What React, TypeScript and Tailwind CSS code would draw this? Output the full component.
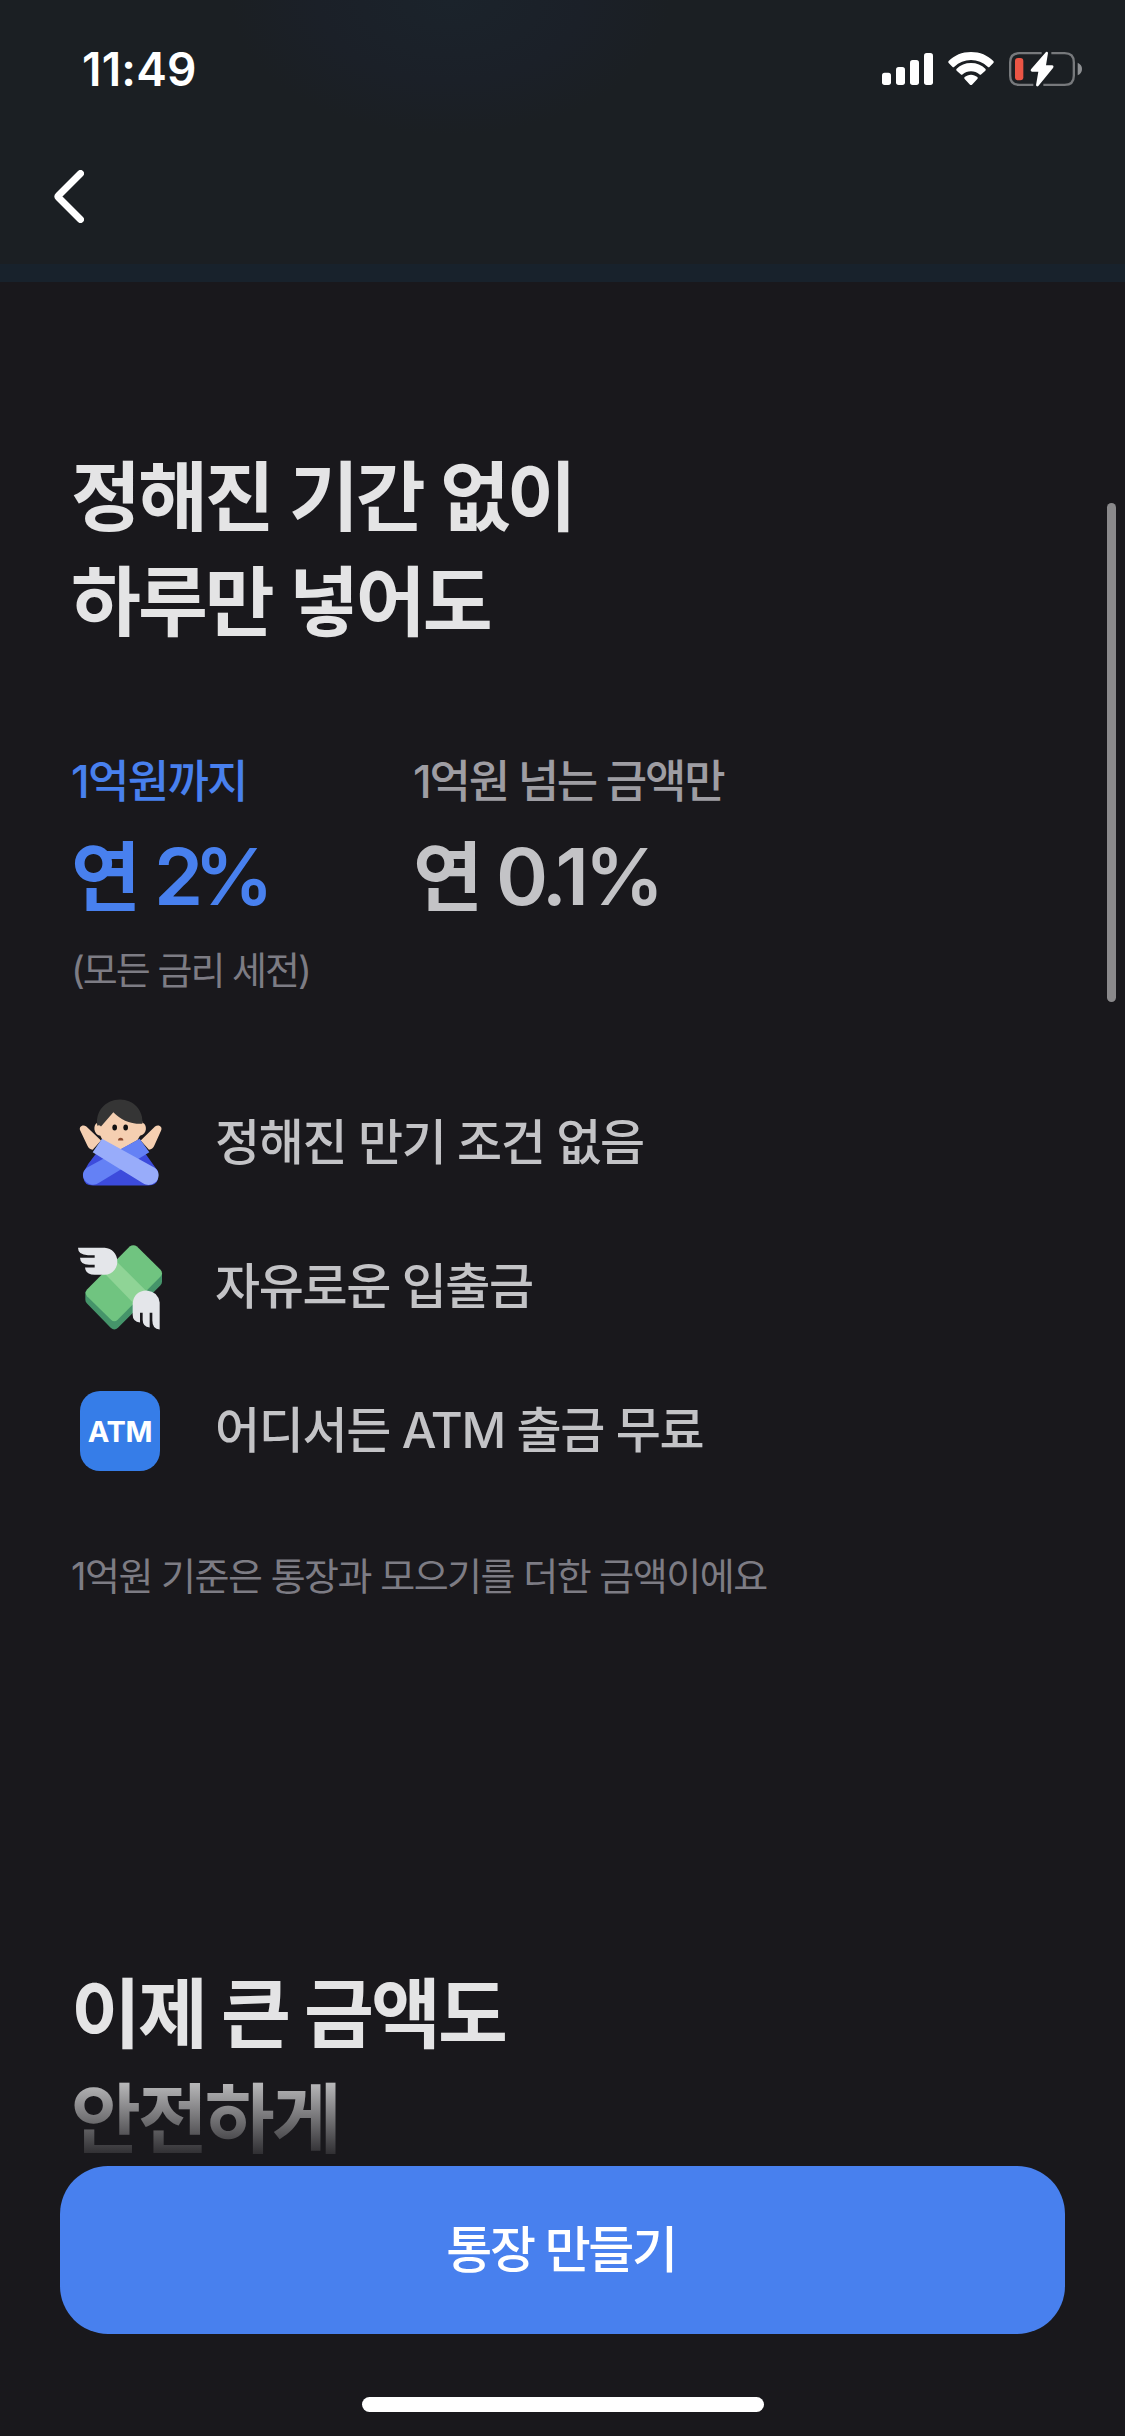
import type { ReactNode } from 'react';

function StatusIcons() {
  return (
    <svg className="h-[80px] w-[240px]" viewBox="0 0 720 240" fill="none">
      <g fill="#fff">
        <rect x="66" y="128" width="27" height="37" rx="8" />
        <rect x="108" y="111" width="27" height="54" rx="8" />
        <rect x="150" y="90" width="27" height="75" rx="8" />
        <rect x="192" y="69" width="27" height="96" rx="8" />
        <path d="M333 66c27 0 50 10 67 27q3 3 0 6l-11 11q-3 3-6 0c-14-13-31-20-50-20s-36 7-50 20q-3 3-6 0l-11-11q-3-3 0-6c17-17 40-27 67-27Z" />
        <path d="M333 99c17 0 32 6 43 17q3 3 0 6l-12 11q-3 3-6 0c-7-6-15-9-25-9s-18 3-25 9q-3 3-6 0l-12-11q-3-3 0-6c11-11 26-17 43-17Z" />
        <path d="M333 134c7 0 14 3 19 7q3 3 0 6l-16 17q-3 2-6 0l-16-17q-3-3 0-6c5-4 12-7 19-7Z" />
      </g>
      <path d="M545 69.500H478Q450.500 69.500 450.500 97V137Q450.500 164.500 478 164.500H520M574 69.500H614Q641.500 69.500 641.500 97V137Q641.500 164.500 614 164.500H550" stroke="#77797c" strokeWidth="7" />
      <path d="M653 98q13 6 13 19t-13 19Z" fill="#8d8f92" />
      <rect x="465" y="84" width="25" height="67" rx="9" fill="#eb5545" />
      <path d="M558 66q5-2 6 3l-6 37h18q7 1 3 8l-44 54q-5 3-7-2l7-41h-19q-6-1-3-7Z" fill="#fff" />
    </svg>
  );
}

function NoGestureIcon() {
  return (
    <svg className="size-24 shrink-0" viewBox="36 43.500 288 288">
      <path d="M61 151c-6-12 7-21 18-13l44 42-25 28q-11-2-16-13ZM303 151c6-12-7-21-18-13l-43 42 25 28q11-2 16-13Z" fill="#f5cfb1" />
      <path d="M106 222 180 170 258 222 294 272V294Q290 315 265 315H99Q72 315 70 290Q68 278 85 250Z" fill="#3c4bdc" />
      <path d="M112 130C114 90 145 60 180 60S246 92 247 127C262 130 263 162 240 166L232 179 181 207 128 179 121 166C99 162 99 132 112 127Z" fill="#f5cfb1" />
      <path d="M112 136C105 92 137 57 180 57C222 57 251 91 247 130C207 131 182 116 160 95L123 138Q117 131 112 136Z" fill="#353535" />
      <ellipse cx="164" cy="141" rx="7" ry="9" fill="#111" />
      <ellipse cx="197" cy="141" rx="7" ry="9" fill="#111" />
      <path d="M174 180q0-8 8-8t8 8Z" fill="#8b4b30" />
      <path d="M239 175 268 215 117 307C101 319 78 311 71 294C66 281 70 269 82 261Z" fill="#6481f5" />
      <path d="M126 175 98 215 249 308C265 319 286 311 293 297C300 282 294 269 284 262Z" fill="#98acfa" />
    </svg>
  );
}

function WingedMoneyIcon() {
  return (
    <svg className="size-24 shrink-0" viewBox="36 25.500 288 288">
      <path d="M76 184 306 128V154Q306 160 301 165L174 292Q163 302 152 292L81 219Q76 214 76 208Z" fill="#45946a" />
      <path d="M209 48Q220 40 231 48L301 117Q311 128 301 139L173 268Q163 277 153 268L81 197Q73 187 81 177Z" fill="#70c480" />
      <path d="m134 129 38-34 92 92-37 38Z" fill="#8fd496" />
      <path d="M54 52H134C156 53 172 71 172 93S156 132 134 133H104Q77 133 75 111H104V103H87Q61 103 60 82H104V74H84Q54 74 54 52Z" fill="#e4e6ea" />
      <path d="M299 297V216Q294 183 260 180Q222 182 218 218V253Q218 274 240 276V247H248V268Q248 289 269 291V247H277V270Q277 296 299 297Z" fill="#e4e6ea" />
    </svg>
  );
}

function AtmIcon() {
  return (
    <div className="flex size-24 shrink-0 items-center justify-center">
      <div className="flex size-20 items-center justify-center rounded-[20px] bg-[#367de8] text-[29px] leading-none font-bold tracking-[-0.300px] text-white">
        ATM
      </div>
    </div>
  );
}

function Feature({ icon, children }: { icon: ReactNode; children: ReactNode }) {
  return (
    <li className="flex h-36 items-center text-[49px] leading-[60px] font-medium tracking-[-1.350px] text-[#c3c3c6]">
      {icon}
      <span className="ml-[47px] whitespace-nowrap">{children}</span>
    </li>
  );
}

export default function App() {
  return (
    <div className="relative flex h-[2436px] w-[1125px] flex-col overflow-hidden bg-[#19181c] font-['Inter','Noto_Sans_CJK_KR',sans-serif]">
      <header className="flex h-[282px] shrink-0 flex-col border-b-[18px] border-[#18222c] bg-[#1b1f23] bg-[radial-gradient(ellipse_220px_135px_at_450px_0px,#1b232b_0%,#1b2028_60%,#1b1f23_100%)]">
        <div className="flex h-[140px] items-start justify-between pt-[30px] pr-[25px] pl-[82px]">
          <span className="pt-[9px] text-[46px] leading-[60px] font-semibold tracking-[0.200px] text-white">11:49</span>
          <StatusIcons />
        </div>
        <button className="ml-[54px] mt-[30px] h-[53px] w-[30px]" aria-label="뒤로">
          <svg viewBox="0 0 30 53" fill="none" className="h-[53px] w-[30px]">
            <path d="M26.500 3.500 4.500 25.500Q3.500 26.500 4.500 27.500L26.500 49.500" stroke="#fff" strokeWidth="7" strokeLinecap="round" />
          </svg>
        </button>
      </header>

      <main className="flex flex-col px-[71px] pt-[163px] whitespace-nowrap">
        <h1 className="text-[76px] leading-[105px] font-semibold tracking-[-3px] [word-spacing:1px] text-[#e4e4e5]">
          정해진 기간 없이
          <br />
          하루만 넣어도
        </h1>

        <section className="mt-[97px] flex">
          <div className="w-[342px] text-[#4880ee]">
            <p className="text-[45px] leading-[60px] font-medium tracking-[-1.700px]">1억원까지</p>
            <p className="mt-5 text-[76px] leading-[90px] font-semibold tracking-[-3px]">
              연 <span className="text-[79px] leading-none tracking-[-9px]">2%</span>
            </p>
            <p className="mt-5 text-[38px] leading-[56px] tracking-[-2px] text-[#7d7c84]">(모든 금리 세전)</p>
          </div>
          <div>
            <p className="text-[45px] leading-[60px] font-medium tracking-[-2.200px] text-[#9e9da3]">1억원 넘는 금액만</p>
            <p className="mt-5 text-[76px] leading-[90px] font-semibold tracking-[-3px] text-[#c3c3c6]">
              연 <span className="text-[79px] leading-none tracking-[-4.300px]">0.1%</span>
            </p>
          </div>
        </section>

        <ul className="mt-[73px] pl-px">
          <Feature icon={<NoGestureIcon />}>정해진 만기 조건 없음</Feature>
          <Feature icon={<WingedMoneyIcon />}>자유로운 입출금</Feature>
          <Feature icon={<AtmIcon />}>어디서든 ATM 출금 무료</Feature>
        </ul>
        <p className="mt-[45px] text-[38px] leading-[56px] tracking-[-1.500px] text-[#7d7c84]">
          1억원 기준은 통장과 모으기를 더한 금액이에요
        </p>

        <h2 className="mt-[358px] text-[76px] leading-[105px] font-semibold tracking-[-3px] text-[#e4e4e5]">
          이제 큰 금액도
          <br />
          안전하게
        </h2>
      </main>

      <div className="absolute top-[503px] right-[9px] h-[499px] w-[9px] rounded-full bg-[#8a898b]" />

      <footer className="absolute inset-x-0 bottom-0 flex flex-col">
        <div className="h-[106px] bg-linear-to-b from-[#19181c]/0 to-[#19181c]" />
        <div className="flex h-[270px] flex-col items-center bg-[#19181c] px-[60px]">
          <button className="h-[168px] w-full rounded-[48px] bg-[#4880ee] pr-[3px] text-[50px] leading-[60px] font-medium tracking-[-2.300px] text-white">
            통장 만들기
          </button>
          <div className="mt-[63px] h-[15px] w-[402px] rounded-full bg-white" />
        </div>
      </footer>
    </div>
  );
}
